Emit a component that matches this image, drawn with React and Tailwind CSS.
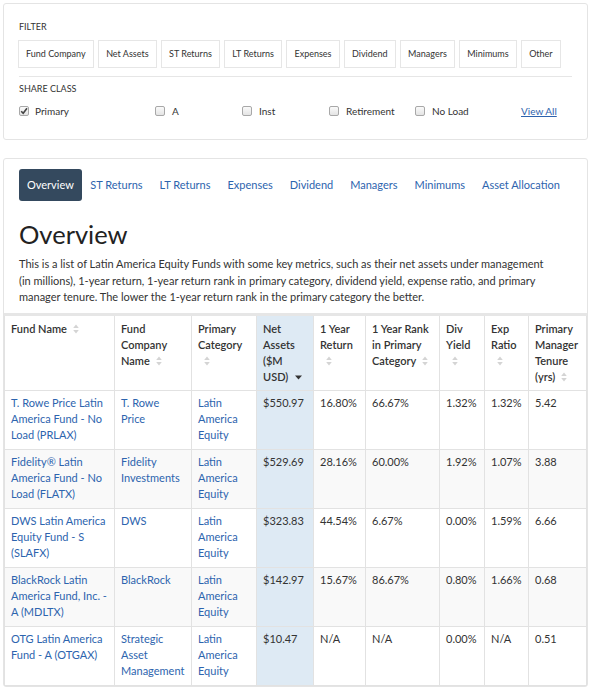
import React from "react";

const font = { fontFamily: "Lato, 'Open Sans', sans-serif" };

const SortIcon = () => (
  <svg width="6" height="10" viewBox="0 0 6 10" className="inline-block ml-[6px] align-[-1px]">
    <path d="M3 0.5L5.8 4H0.2Z M0.2 6H5.8L3 9.5Z" fill="#d4d4d4" />
  </svg>
);

const DownIcon = () => (
  <svg width="7" height="5" viewBox="0 0 7 5" className="inline-block ml-[7px] align-[1px]">
    <path d="M0 0.5H7L3.5 4.5Z" fill="#333" />
  </svg>
);

const Box = ({ checked }) => (
  <span className="inline-flex w-[10px] h-[10px] border border-[#a8a8a8] rounded-[2px] bg-gradient-to-b from-[#fafafa] to-[#e4e4e4] items-center justify-center">
    {checked && (
      <svg width="8" height="8" viewBox="0 0 8 8">
        <path d="M1.2 4.2L3.2 6.3L7 1.2" stroke="#444" strokeWidth="1.6" fill="none" />
      </svg>
    )}
  </span>
);

const filters = ["Fund Company", "Net Assets", "ST Returns", "LT Returns", "Expenses", "Dividend", "Managers", "Minimums", "Other"];
const tabs = ["ST Returns", "LT Returns", "Expenses", "Dividend", "Managers", "Minimums", "Asset Allocation"];

const rows = [
  ["T. Rowe Price Latin America Fund - No Load (PRLAX)", "T. Rowe Price", "$550.97", "16.80%", "66.67%", "1.32%", "1.32%", "5.42"],
  ["Fidelity® Latin America Fund - No Load (FLATX)", "Fidelity Investments", "$529.69", "28.16%", "60.00%", "1.92%", "1.07%", "3.88"],
  ["DWS Latin America Equity Fund - S (SLAFX)", "DWS", "$323.83", "44.54%", "6.67%", "0.00%", "1.59%", "6.66"],
  ["BlackRock Latin America Fund, Inc. - A (MDLTX)", "BlackRock", "$142.97", "15.67%", "86.67%", "0.80%", "1.66%", "0.68"],
  ["OTG Latin America Fund - A (OTGAX)", "Strategic Asset Management", "$10.47", "N/A", "N/A", "0.00%", "N/A", "0.51"],
];

const th = "border border-t-0 border-[#e2e2e2] px-[6px] pt-[5px] pb-[5px] text-left align-top font-semibold text-[#333]";
const td = "border border-[#e2e2e2] px-[6px] pt-[4px] pb-[6px] align-top";

export default function App() {
  return (
    <div style={font} className="bg-white w-[593px] min-h-[690px] pt-[3px] pl-[3px] text-[#333]">
      {/* Filter panel */}
      <div className="w-[585px] border border-[#e4e4e4] rounded-[3px] px-[15px] pt-[16px] pb-[21px]">
        <div className="text-[9px] leading-[14px] uppercase text-[#333]">Filter</div>
        <div className="flex gap-[4.5px] mt-[6px] -ml-[1px]">
          {filters.map((f) => (
            <div key={f} className="h-[28px] px-[7px] flex items-center border border-[#e6e6e6] text-[9px] text-[#333] whitespace-nowrap">
              {f}
            </div>
          ))}
        </div>
        <div className="border-t border-[#e6e6e6] mt-[8px]" />
        <div className="text-[9px] leading-[14px] uppercase text-[#333] mt-[5px]">Share Class</div>
        <div className="flex items-center mt-[8px] text-[10px] leading-[14px] text-[#333]">
          <div className="w-[136px] flex items-center gap-[6px]"><Box checked />Primary</div>
          <div className="w-[87px] flex items-center gap-[7px]"><Box />A</div>
          <div className="w-[87px] flex items-center gap-[7px]"><Box />Inst</div>
          <div className="w-[86px] flex items-center gap-[7px]"><Box />Retirement</div>
          <div className="w-[106px] flex items-center gap-[7px]"><Box />No Load</div>
          <a className="text-[#2d62ad] underline">View All</a>
        </div>
      </div>

      {/* Main panel */}
      <div className="w-[585px] border border-[#e4e4e4] rounded-[3px] mt-[18px]">
        <div className="px-[15px] pt-[10px]">
          <div className="flex items-center text-[11px]">
            <div className="h-[32px] px-[8px] flex items-center bg-[#34495e] text-white rounded-[3px]">Overview</div>
            {tabs.map((t) => (
              <div key={t} className="h-[32px] px-[8.5px] flex items-center text-[#2d64ae] whitespace-nowrap">{t}</div>
            ))}
          </div>
          <h1 className="text-[25.5px] leading-[30px] text-[#222] mt-[18px]">Overview</h1>
          <p className="text-[11px] leading-[16.5px] text-[#333] mt-[7px] w-[535px]">
            This is a list of Latin America Equity Funds with some key metrics, such as their net assets under management (in millions), 1-year return, 1-year return rank in primary category, dividend yield, expense ratio, and primary manager tenure. The lower the 1-year return rank in the primary category the better.
          </p>
        </div>
        <div className="mt-[7px] border-t-[3px] border-[#e6e6e6]">
          <table className="table-fixed border-collapse w-[582px] text-[11px] leading-[16px]">
            <colgroup>
              <col className="w-[110px]" />
              <col className="w-[77px]" />
              <col className="w-[65px]" />
              <col className="w-[57px]" />
              <col className="w-[52px]" />
              <col className="w-[74px]" />
              <col className="w-[45px]" />
              <col className="w-[44px]" />
              <col className="w-[58px]" />
            </colgroup>
            <thead>
              <tr>
                <th className={th}>Fund Name<SortIcon /></th>
                <th className={th}>Fund Company Name<SortIcon /></th>
                <th className={th}>Primary Category<SortIcon /></th>
                <th className={th + " bg-[#deeaf4]"}>Net Assets ($M USD)<DownIcon /></th>
                <th className={th}>1 Year Return<SortIcon /></th>
                <th className={th}>1 Year Rank in Primary Category<SortIcon /></th>
                <th className={th}>Div Yield<SortIcon /></th>
                <th className={th}>Exp Ratio<SortIcon /></th>
                <th className={th}>Primary Manager Tenure (yrs)<SortIcon /></th>
              </tr>
            </thead>
            <tbody>
              {rows.map((r, i) => (
                <tr key={i} className={i % 2 === 1 ? "bg-[#f9f9f9]" : "bg-white"}>
                  <td className={td + " text-[#2d64ae]"}>{r[0]}</td>
                  <td className={td + " text-[#2d64ae]"}>{r[1]}</td>
                  <td className={td + " text-[#2d64ae]"}>Latin America Equity</td>
                  <td className={td + " bg-[#deeaf4]"}>{r[2]}</td>
                  <td className={td}>{r[3]}</td>
                  <td className={td}>{r[4]}</td>
                  <td className={td}>{r[5]}</td>
                  <td className={td}>{r[6]}</td>
                  <td className={td}>{r[7]}</td>
                </tr>
              ))}
            </tbody>
          </table>
        </div>
      </div>
    </div>
  );
}
